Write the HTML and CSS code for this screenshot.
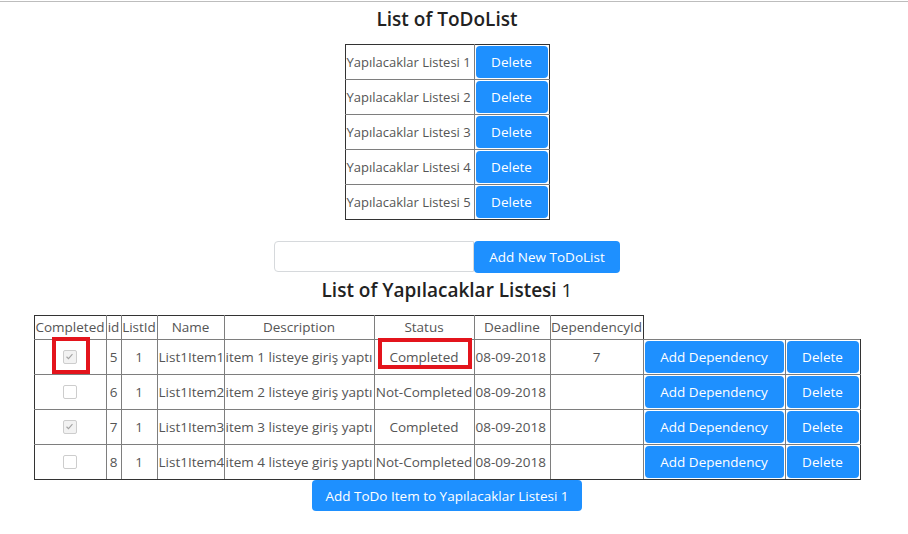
FILE: index.html
```html
<!DOCTYPE html>
<html lang="tr">
<head>
<meta charset="utf-8">
<title>ToDoList</title>
<link rel="stylesheet" href="styles.css">
</head>
<body>
<div class="topline"></div>
<main class="page">
  <h1 class="title title-lists">List of ToDoList</h1>
  <table class="lists">
    <colgroup><col class="c-listname"><col class="c-listdel"></colgroup>
    <tr><td class="list-name">Yapılacaklar Listesi 1</td><td class="btn-cell"><button class="btn">Delete</button></td></tr>
    <tr><td class="list-name">Yapılacaklar Listesi 2</td><td class="btn-cell"><button class="btn">Delete</button></td></tr>
    <tr><td class="list-name">Yapılacaklar Listesi 3</td><td class="btn-cell"><button class="btn">Delete</button></td></tr>
    <tr><td class="list-name">Yapılacaklar Listesi 4</td><td class="btn-cell"><button class="btn">Delete</button></td></tr>
    <tr><td class="list-name">Yapılacaklar Listesi 5</td><td class="btn-cell"><button class="btn">Delete</button></td></tr>
  </table>

  <div class="add-list">
    <input class="list-input" type="text">
    <button class="btn btn-add-list">Add New ToDoList</button>
  </div>

  <h2 class="title title-items">List of Yapılacaklar Listesi <span class="title-num">1</span></h2>

  <table class="items">
    <colgroup>
      <col class="c-completed"><col class="c-id"><col class="c-listid"><col class="c-name"><col class="c-desc">
      <col class="c-status"><col class="c-deadline"><col class="c-dep"><col class="c-adddep"><col class="c-del">
    </colgroup>
    <tr class="head">
      <th>Completed</th><th>id</th><th>ListId</th><th>Name</th><th>Description</th><th>Status</th><th>Deadline</th><th>DependencyId</th>
    </tr>
    <tr>
      <td class="center mark-cell"><span class="check checked"><svg viewBox="0 0 13 13" width="11" height="11"><path d="M3 6.8 L5.3 9 L10 3.8" fill="none" stroke="#a3a3a3" stroke-width="1.3"/></svg></span><span class="mark mark-check"></span></td>
      <td class="center">5</td><td class="center">1</td><td>List1Item1</td><td>item 1 listeye giriş yaptı</td>
      <td class="center mark-cell">Completed<span class="mark mark-status"></span></td>
      <td>08-09-2018</td><td class="center">7</td>
      <td class="btn-cell"><button class="btn">Add Dependency</button></td>
      <td class="btn-cell"><button class="btn">Delete</button></td>
    </tr>
    <tr>
      <td class="center"><span class="check"></span></td>
      <td class="center">6</td><td class="center">1</td><td>List1Item2</td><td>item 2 listeye giriş yaptı</td>
      <td class="center">Not-Completed</td>
      <td>08-09-2018</td><td class="center"></td>
      <td class="btn-cell"><button class="btn">Add Dependency</button></td>
      <td class="btn-cell"><button class="btn">Delete</button></td>
    </tr>
    <tr>
      <td class="center"><span class="check checked"><svg viewBox="0 0 13 13" width="11" height="11"><path d="M3 6.8 L5.3 9 L10 3.8" fill="none" stroke="#a3a3a3" stroke-width="1.3"/></svg></span></td>
      <td class="center">7</td><td class="center">1</td><td>List1Item3</td><td>item 3 listeye giriş yaptı</td>
      <td class="center">Completed</td>
      <td>08-09-2018</td><td class="center"></td>
      <td class="btn-cell"><button class="btn">Add Dependency</button></td>
      <td class="btn-cell"><button class="btn">Delete</button></td>
    </tr>
    <tr>
      <td class="center"><span class="check"></span></td>
      <td class="center">8</td><td class="center">1</td><td>List1Item4</td><td>item 4 listeye giriş yaptı</td>
      <td class="center">Not-Completed</td>
      <td>08-09-2018</td><td class="center"></td>
      <td class="btn-cell"><button class="btn">Add Dependency</button></td>
      <td class="btn-cell"><button class="btn">Delete</button></td>
    </tr>
  </table>

  <button class="btn btn-add-item">Add ToDo Item to Yapılacaklar Listesi 1</button>
</main>
</body>
</html>
```

FILE: styles.css
```css
html, body {
  margin: 0;
  padding: 0;
  background: #fff;
}
body {
  font-family: "Open Sans", "Noto Sans", sans-serif;
  font-size: 13.5px;
  color: #555;
}
.topline {
  margin-top: 1px;
  height: 1px;
  background: #bdbdbd;
}
.page {
  width: 894px;
  display: flex;
  flex-direction: column;
  align-items: center;
}
.title {
  margin: 0;
  font-size: 19px;
  font-weight: 600;
  line-height: 24px;
  color: #222;
  text-align: center;
}
.title-lists {
  margin-top: 5px;
  margin-bottom: 13px;
}
.title-items {
  margin-top: 5px;
  margin-bottom: 13px;
}
.title-num {
  font-weight: 400;
}

table {
  border-collapse: collapse;
  table-layout: fixed;
}
td, th {
  border: 1px solid #7e7e7e;
  padding: 0 1px;
  white-space: nowrap;
  vertical-align: middle;
  text-align: left;
  font-weight: 400;
}
tr:first-child > td, tr:first-child > th { border-top-color: #333; }
tr:last-child > td { border-bottom-color: #333; }
td:first-child, th:first-child { border-left-color: #333; }
td:last-child, th:last-child { border-right-color: #333; }

.lists { width: 204px; }
.c-listname { width: 129px; }
.c-listdel { width: 75px; }
.list-name { font-size: 13px; }

.btn-cell { padding: 1px; }
.btn {
  font-family: "Open Sans", "Noto Sans", sans-serif;
  font-size: 13.5px;
  color: #fff;
  background: #1e90ff;
  border: none;
  border-radius: 4px;
  height: 32px;
  padding: 0;
  display: block;
  cursor: pointer;
}
.btn-cell .btn { width: 100%; }

.add-list {
  display: flex;
  align-items: flex-start;
  margin-top: 21px;
}
.list-input {
  box-sizing: border-box;
  width: 200px;
  height: 31px;
  border: 1px solid #d6d9dc;
  border-radius: 4px 0 0 4px;
  margin: 0;
  padding: 0 8px;
  font-family: inherit;
}
.btn-add-list {
  width: 146px;
  height: 32px;
}

.items { width: 826px; }
.c-completed { width: 72px; }
.c-id { width: 15px; }
.c-listid { width: 36px; }
.c-name { width: 67px; }
.c-desc { width: 150px; }
.c-status { width: 100px; }
.c-deadline { width: 76px; }
.c-dep { width: 93px; }
.c-adddep { width: 142px; }
.c-del { width: 75px; }

.items th {
  height: 23px;
  line-height: 23px;
  padding: 0;
  text-align: center;
}
.items td.center { text-align: center; }

.check {
  display: inline-block;
  box-sizing: border-box;
  width: 14px;
  height: 14px;
  border: 1px solid #cdcdcd;
  border-radius: 2px;
  background: #fff;
  vertical-align: middle;
  position: relative;
  top: -1px;
}
.check.checked { background: #f2f2f2; }
.check svg { display: block; margin: 0; }

.mark-cell { position: relative; }
.mark {
  position: absolute;
  box-sizing: border-box;
  border: 4px solid #e3141c;
  pointer-events: none;
}
.mark-check {
  left: 17px;
  top: -3px;
  width: 38px;
  height: 37px;
}
.mark-status {
  left: 3px;
  top: -2px;
  width: 94px;
  height: 31px;
}

.btn-add-item {
  margin-top: 0;
  width: 270px;
  height: 31px;
}
```
